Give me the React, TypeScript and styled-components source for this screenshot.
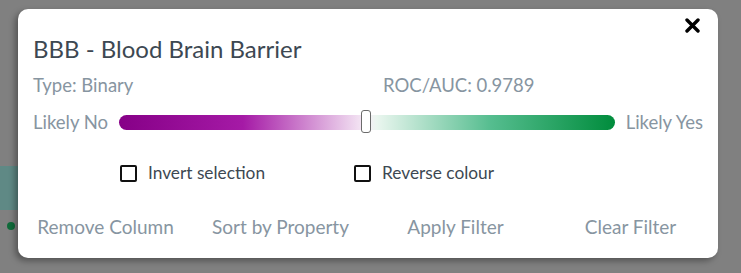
import styled, { createGlobalStyle } from 'styled-components';

const GlobalStyle = createGlobalStyle`
  html, body {
    margin: 0;
    padding: 0;
    background: #808080;
    font-family: Lato, 'Noto Sans', sans-serif;
  }
`;

const Page = styled.div`
  position: relative;
  width: 741px;
  height: 273px;
  overflow: hidden;
  background: #808080;
`;

// dimmed table behind the overlay
const Behind = styled.div`
  padding-top: 166px;
  display: flex;
  flex-direction: column;
  gap: 12px;
  width: 18px;
`;

const TealCell = styled.div`
  height: 44px;
  background: #5f8985;
`;

const Molecule = styled.div`
  margin-left: 7px;
  width: 8px;
  height: 8px;
  border-radius: 50%;
  background: #0f6b3a;
`;

const Modal = styled.div`
  position: absolute;
  left: 18px;
  top: 9px;
  width: 700px;
  height: 249px;
  box-sizing: border-box;
  background: #fff;
  border-radius: 10px;
  box-shadow: -3px 3px 6px rgba(0, 0, 0, 0.35);
  padding: 25px 0 0;
  display: flex;
  flex-direction: column;
`;

const Close = styled.button`
  position: absolute;
  top: 7px;
  right: 17px;
  width: 18px;
  height: 18px;
  padding: 0;
  border: 0;
  background: none;
  display: flex;
  align-items: center;
  justify-content: center;
`;

const Body = styled.div`
  padding: 0 15px;
  display: flex;
  flex-direction: column;
`;

const Title = styled.h2`
  margin: 0;
  font-size: 24px;
  font-weight: 400;
  line-height: 29px;
  color: #3d4852;
`;

const InfoRow = styled.div`
  margin-top: 10px;
  display: grid;
  grid-template-columns: 350px 1fr;
  font-size: 18.5px;
  line-height: 24px;
  color: #8795a1;
`;

const SliderRow = styled.div`
  margin-top: 13px;
  display: flex;
  align-items: center;
  gap: 11px;
  font-size: 18.5px;
  line-height: 24px;
  color: #8795a1;
`;

const Track = styled.div`
  position: relative;
  flex: 1;
  height: 15px;
  border-radius: 8px;
  background: linear-gradient(
    to right,
    #860087 0%,
    #a51aa6 25%,
    #f7eef7 50%,
    #eaf6ef 52%,
    #55bd8f 75%,
    #008c3c 100%
  );
`;

const Handle = styled.div`
  position: absolute;
  left: 242px;
  top: -5px;
  width: 8px;
  height: 21px;
  border: 1.5px solid #6b6b6b;
  border-radius: 3px;
  background: #fff;
`;

const CheckRow = styled.div`
  margin-top: 27px;
  padding-left: 87px;
  display: flex;
  gap: 89px;
`;

const Check = styled.label`
  display: flex;
  align-items: center;
  gap: 11px;
  font-size: 17.3px;
  line-height: 24px;
  color: #3d4852;
`;

const Box = styled.span`
  width: 13px;
  height: 13px;
  border: 2px solid #111;
  border-radius: 2px;
`;

const Actions = styled.div`
  margin-top: 30px;
  display: grid;
  grid-template-columns: repeat(4, 1fr);
`;

const Action = styled.button`
  border: 0;
  background: none;
  padding: 0;
  font-family: inherit;
  font-size: 19px;
  line-height: 24px;
  color: #8795a1;
  text-align: center;
`;

const App = () => {
  return (
    <Page>
      <GlobalStyle />
      <Behind>
        <TealCell />
        <Molecule />
      </Behind>
      <Modal>
        <Close aria-label="Close">
          <svg width="15" height="15" viewBox="0 0 15 15">
            <path d="M2 2 L13 13 M13 2 L2 13" stroke="#000" strokeWidth="3.4" strokeLinecap="round" />
          </svg>
        </Close>
        <Body>
          <Title>BBB - Blood Brain Barrier</Title>
          <InfoRow>
            <span>Type: Binary</span>
            <span>ROC/AUC: 0.9789</span>
          </InfoRow>
          <SliderRow>
            <span>Likely No</span>
            <Track>
              <Handle />
            </Track>
            <span>Likely Yes</span>
          </SliderRow>
          <CheckRow>
            <Check>
              <Box />
              Invert selection
            </Check>
            <Check>
              <Box />
              Reverse colour
            </Check>
          </CheckRow>
        </Body>
        <Actions>
          <Action>Remove Column</Action>
          <Action>Sort by Property</Action>
          <Action>Apply Filter</Action>
          <Action>Clear Filter</Action>
        </Actions>
      </Modal>
    </Page>
  );
};

export default App;
